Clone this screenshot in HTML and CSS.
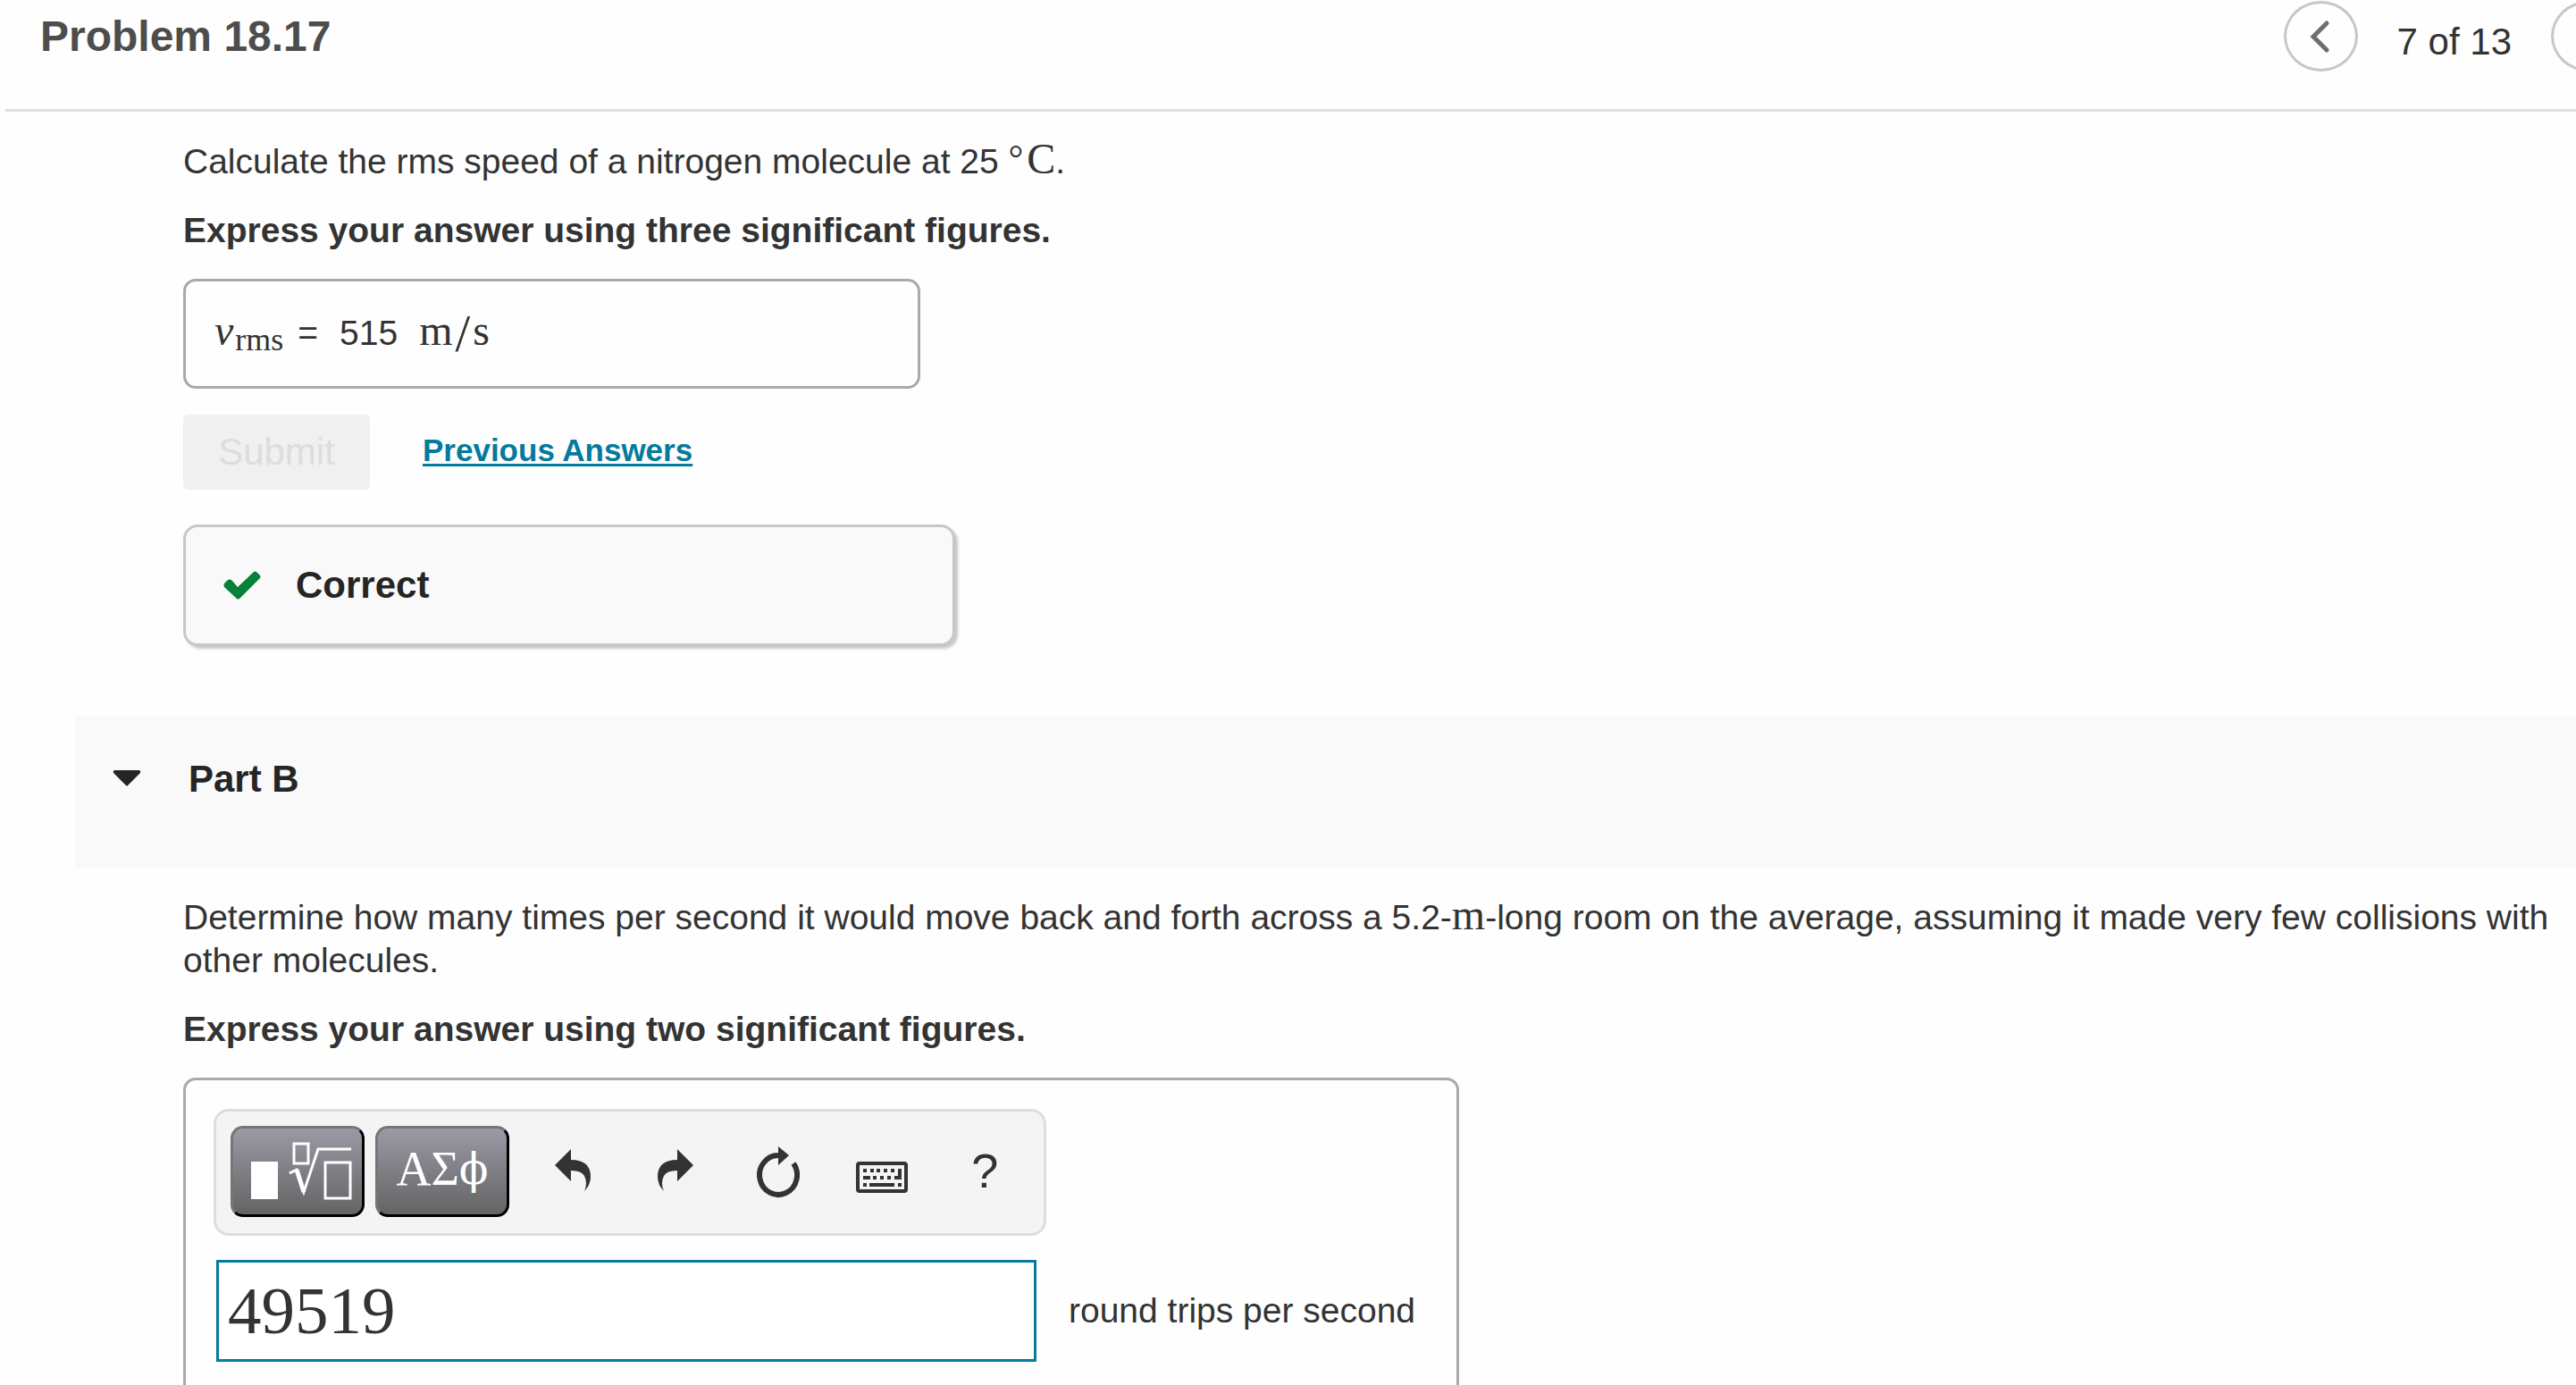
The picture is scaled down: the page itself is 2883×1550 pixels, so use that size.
FILE: index.html
```
<!DOCTYPE html>
<html lang="en">

<head>
    <meta charset="UTF-8">
    <meta name="viewport" content="width=device-width, initial-scale=1.0">
    <title>Problem 18.17</title>
    <link rel="stylesheet" href="styles.css">
</head>

<body>
    <header class="header">
        <h1>Problem 18.17</h1>
        <nav class="pager">
            <button class="round-btn" aria-label="Previous item">
                <svg width="24" height="38" viewBox="0 0 24 38">
                    <path d="M19 4 L4 19 L19 34" fill="none" stroke="#6a7070" stroke-width="5" stroke-linecap="round" />
                </svg>
            </button>
            <span class="pager-text">7 of 13</span>
            <button class="round-btn" aria-label="Next item"></button>
        </nav>
    </header>

    <main>
        <section class="part">
            <p>Calculate the rms speed of a nitrogen molecule at 25 <span class="math"><span class="degree">°</span>C</span>.</p>
            <p class="instructions">Express your answer using three significant figures.</p>
            <div class="answer-box">
                <span class="math"><i>v</i><sub>rms</sub></span>
                <span class="equals">=</span>
                <span class="value">515</span>
                <span class="math">m<span class="slash">/</span>s</span>
            </div>
            <div class="actions">
                <button class="submit" disabled>Submit</button>
                <a href="#" class="previous">Previous Answers</a>
            </div>
            <div class="feedback">
                <svg width="42" height="32" viewBox="0 0 42 32">
                    <path d="M1 14 L5 10 Q7 9 9 10 L16 18 L34 1 Q36 0 37 1 L41 5 Q42 7 41 8 L18 31 Q16 32 15 31 L1 18 Q0 16 1 14 Z" fill="#038238" />
                </svg>
                <span>Correct</span>
            </div>
        </section>

        <div class="part-header">
            <svg width="32" height="18" viewBox="0 0 32 18">
                <path d="M2 0 H30 Q32 1 31 3 L17 17 Q16 18 15 17 L1 3 Q0 1 2 0 Z" fill="#252525" />
            </svg>
            <h2>Part B</h2>
        </div>

        <section class="part">
            <p>Determine how many times per second it would move back and forth across a 5.2-<span class="math">m</span>-long room on the average, assuming it made very few collisions with other molecules.</p>
            <p class="instructions">Express your answer using two significant figures.</p>
            <div class="entry-box">
                <div class="toolbar">
                    <button class="dark-btn" aria-label="Templates">
                        <svg width="114" height="66" viewBox="0 0 114 66">
                            <rect x="1" y="22" width="30" height="42" fill="#fff" />
                            <g fill="none" stroke="#fff" stroke-width="3">
                                <rect x="49" y="2" width="16" height="22" />
                                <rect x="84" y="23" width="28" height="40" />
                                <path d="M44 35 L52 31 L60 56 L76 8 H113" />
                                <path d="M52 31 L60 56" stroke-width="5" />
                            </g>
                        </svg>
                    </button>
                    <button class="dark-btn greek" aria-label="Symbols">ΑΣ<span class="phi">ϕ</span></button>
                    <div class="tools">
                        <button class="tool" aria-label="Undo">
                            <svg width="60" height="60" viewBox="0 0 60 60">
                                <path d="M11 23 L29 5 V17 Q51 17 51 36 Q51 45 44 52 Q48 43 44 35 Q41 29 29 29 V41 Z" />
                            </svg>
                        </button>
                        <button class="tool" aria-label="Redo">
                            <svg width="60" height="60" viewBox="0 0 60 60">
                                <path d="M51 23 L33 5 V17 Q11 17 11 36 Q11 45 18 52 Q14 43 18 35 Q21 29 33 29 V41 Z" />
                            </svg>
                        </button>
                        <button class="tool" aria-label="Reset">
                            <svg width="60" height="60" viewBox="0 0 60 60">
                                <path d="M30 12 A21 22 0 1 0 47 21" fill="none" stroke="#333" stroke-width="6" />
                                <path d="M30 2 L42 12 L30 23 Z" />
                            </svg>
                        </button>
                        <button class="tool" aria-label="Keyboard shortcuts">
                            <svg width="60" height="60" viewBox="0 0 60 60">
                                <rect x="3" y="21" width="54" height="31" rx="2" fill="none" stroke="#333" stroke-width="4" />
                                <path d="M9 27h4v4h-4z M17 27h4v4h-4z M24 27h4v4h-4z M32 27h4v4h-4z M40 27h4v4h-4z M48 27h4v12h-8v-4h4z" />
                                <path d="M9 35h8v4h-8z M20 35h4v4h-4z M28 35h4v4h-4z M36 35h4v4h-4z" />
                                <path d="M9 43h4v4h-4z M16 43h28v4h-28z M48 43h4v4h-4z" />
                            </svg>
                        </button>
                        <button class="tool help" aria-label="Help">?</button>
                    </div>
                </div>
                <div class="entry-row">
                    <input type="text" id="trips" class="entry" value="49519">
                    <label for="trips">round trips per second</label>
                </div>
            </div>
        </section>
    </main>
</body>

</html>
```

FILE: styles.css
```
* {
    box-sizing: border-box;
}

body {
    margin: 0;
    overflow: hidden;
    font-family: "Liberation Sans", Arial, sans-serif;
    font-size: 39px;
    line-height: 48px;
    color: #333;
    background: #fefefe;
}

button,
input {
    font-family: inherit;
    color: inherit;
    padding: 0;
}

.header {
    display: flex;
    justify-content: space-between;
    align-items: flex-start;
    height: 125px;
    margin-left: 6px;
    padding-left: 39px;
    border-bottom: 3px solid #e0e0e0;
}

h1 {
    margin: 17px 0 0;
    font-size: 48px;
    line-height: 48px;
    color: #4d4d4d;
}

.pager {
    display: flex;
    align-items: center;
    gap: 44px;
    margin-right: -55px;
    padding-top: 1px;
}

.pager-text {
    padding-top: 12px;
    font-size: 42px;
}

.round-btn {
    display: flex;
    align-items: center;
    justify-content: center;
    width: 83px;
    height: 79px;
    border: 3px solid #c7c7c7;
    border-radius: 50%;
    background: none;
}

.part {
    padding: 32px 24px 0 205px;
}

p {
    margin: 0 0 29px;
}

.instructions {
    margin-bottom: 30px;
    font-weight: bold;
}

.math {
    font-family: "Liberation Serif", "Times New Roman", serif;
    font-size: 48px;
    line-height: 32px;
}

.math sub {
    font-size: 36px;
    line-height: 1;
    vertical-align: -6px;
    margin-left: 2px;
}

.degree {
    margin-right: 4px;
    font-size: 42px;
    vertical-align: 3px;
}

.slash {
    margin: 0 3px;
    font-size: 60px;
    vertical-align: -7px;
}

.answer-box {
    display: flex;
    align-items: baseline;
    width: 825px;
    height: 123px;
    padding: 34px 32px;
    border: 3px solid #a9a9a9;
    border-radius: 14px;
}

.equals {
    margin: 0 24px 0 16px;
}

.value {
    margin-right: 24px;
}

.actions {
    display: flex;
    align-items: center;
    gap: 59px;
    margin: 29px 0 39px;
}

.submit {
    width: 209px;
    height: 84px;
    border: 0;
    border-radius: 5px;
    font-size: 42px;
    color: #ddd;
    background: #f0f0f0;
}

.previous {
    padding-bottom: 4px;
    font-size: 35px;
    font-weight: bold;
    color: #047a9c;
    text-decoration-thickness: 3px;
    text-underline-offset: 3px;
}

.feedback {
    display: flex;
    align-items: center;
    gap: 39px;
    width: 864px;
    height: 136px;
    padding: 0 42px;
    border: 3px solid #c7c7c7;
    border-radius: 16px;
    background: #f9f9f9;
    box-shadow: 3px 3px 3px #c7c7c7;
    font-size: 42px;
    font-weight: bold;
    color: #252525;
}

.part-header {
    display: flex;
    align-items: flex-start;
    gap: 53px;
    height: 169px;
    margin: 79px 0 0 84px;
    padding: 46px 42px;
    background: #f9f9f9;
}

.part-header svg {
    margin-top: 14px;
}

h2 {
    margin: 0;
    font-size: 42px;
    color: #252525;
}

.entry-box {
    width: 1428px;
    padding: 32px 31px 36px;
    border: 3px solid #a9a9a9;
    border-radius: 14px;
}

.toolbar {
    display: flex;
    align-items: center;
    gap: 12px;
    width: 932px;
    height: 142px;
    padding: 0 8px 2px 16px;
    border: 3px solid #ddd;
    border-radius: 17px;
    background: #f4f4f4;
}

.dark-btn {
    display: flex;
    align-items: center;
    justify-content: center;
    width: 150px;
    height: 102px;
    border: 3px outset #767676;
    border-color: #767676 #222 #222 #767676;
    border-radius: 14px;
    color: #fff;
    background: linear-gradient(#9b99a5, #646464);
}

.dark-btn svg {
    margin-left: 8px;
}

.greek {
    padding-bottom: 6px;
    font-family: "Liberation Serif", "Times New Roman", serif;
    font-size: 54px;
}

.phi {
    font-family: "DejaVu Serif", serif;
    font-size: 48px;
}

.tools {
    display: flex;
    flex: 1;
}

.tool {
    display: flex;
    flex: 1;
    align-items: center;
    justify-content: center;
    height: 60px;
    border: 0;
    background: none;
    fill: #333;
}

.help {
    padding-bottom: 3px;
    font-size: 54px;
}

.entry-row {
    display: flex;
    align-items: center;
    gap: 36px;
    margin: 27px 0 0 3px;
}

.entry {
    width: 918px;
    height: 114px;
    padding: 0 10px;
    border: 3px solid #047a9c;
    outline: none;
    font-family: "Liberation Serif", "Times New Roman", serif;
    font-size: 75px;
    background: #fff;
}
```
